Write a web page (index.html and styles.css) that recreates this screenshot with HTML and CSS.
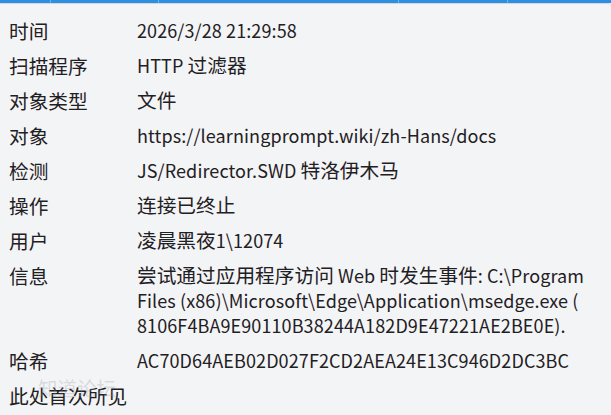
FILE: index.html
```html
<!DOCTYPE html>
<html lang="zh-Hans">
<head>
<meta charset="utf-8">
<title>检测详细信息</title>
<link rel="stylesheet" href="styles.css">
</head>
<body>
<div class="tabs">
  <span class="tab tab-1"></span>
  <span class="tab tab-2"></span>
  <span class="tab tab-3"></span>
  <span class="tab tab-4"></span>
  <span class="tab tab-5"></span>
</div>
<div class="panel">
  <dl class="details">
    <dt>时间</dt><dd>2026/3/28 21:29:58</dd>
    <dt>扫描程序</dt><dd>HTTP <span class="cjk">过滤器</span></dd>
    <dt>对象类型</dt><dd><span class="cjk">文件</span></dd>
    <dt>对象</dt><dd>https://learningprompt.wiki/zh-Hans/docs</dd>
    <dt>检测</dt><dd>JS/Redirector.SWD <span class="cjk">特洛伊木马</span></dd>
    <dt>操作</dt><dd><span class="cjk">连接已终止</span></dd>
    <dt>用户</dt><dd><span class="cjk">凌晨黑夜</span>1\12074</dd>
    <dt>信息</dt><dd><span class="cjk">尝试通过应用程序访问</span> Web <span class="cjk">时发生事件</span>: C:\Program<br>Files (x86)\Microsoft\Edge\Application\msedge.exe (<br>8106F4BA9E90110B38244A182D9E47221AE2BE0E).</dd>
    <dt>哈希</dt><dd>AC70D64AEB02D027F2CD2AEA24E13C946D2DC3BC</dd>
    <dt>此处首次所见</dt><dd></dd>
  </dl>
  <div class="watermark">知道论坛</div>
</div>
</body>
</html>
```
FILE: styles.css
```css
html, body {
  margin: 0;
  padding: 0;
  background: #f3f4f6;
  height: 100%;
  overflow: hidden;
}
body {
  font-family: "Noto Sans CJK SC", "Noto Sans", sans-serif;
  color: #1f2023;
}
.tabs {
  display: flex;
  height: 3px;
  background: #2e8fe0;
}
.tab {
  height: 3px;
  border-right: 1px solid #6fb2ea;
}
.tab-1 { width: 50px; }
.tab-2 { width: 107px; }
.tab-3 { width: 239px; }
.tab-4 { width: 108px; }
.tab-5 { flex: 1; border-right: none; }
.panel {
  position: relative;
  border-top: 1px solid #d3d8de;
  border-top-right-radius: 4px;
  padding: 14px 8px 0 9px;
}
.details {
  margin: 0;
  display: grid;
  grid-template-columns: 128px 1fr;
  row-gap: 10px;
  line-height: 25px;
}
.details dt,
.details dd {
  margin: 0;
  white-space: nowrap;
}
.details dt {
  font-size: 19.7px;
}
.details dd {
  font-size: 18px;
  letter-spacing: 0.1px;
}
.details .cjk {
  font-size: 19.7px;
  line-height: 1;
  letter-spacing: 0;
}
.watermark {
  position: absolute;
  left: 38px;
  top: 372px;
  font-size: 19.5px;
  line-height: 24px;
  color: rgba(150, 155, 165, 0.3);
  pointer-events: none;
}
```
